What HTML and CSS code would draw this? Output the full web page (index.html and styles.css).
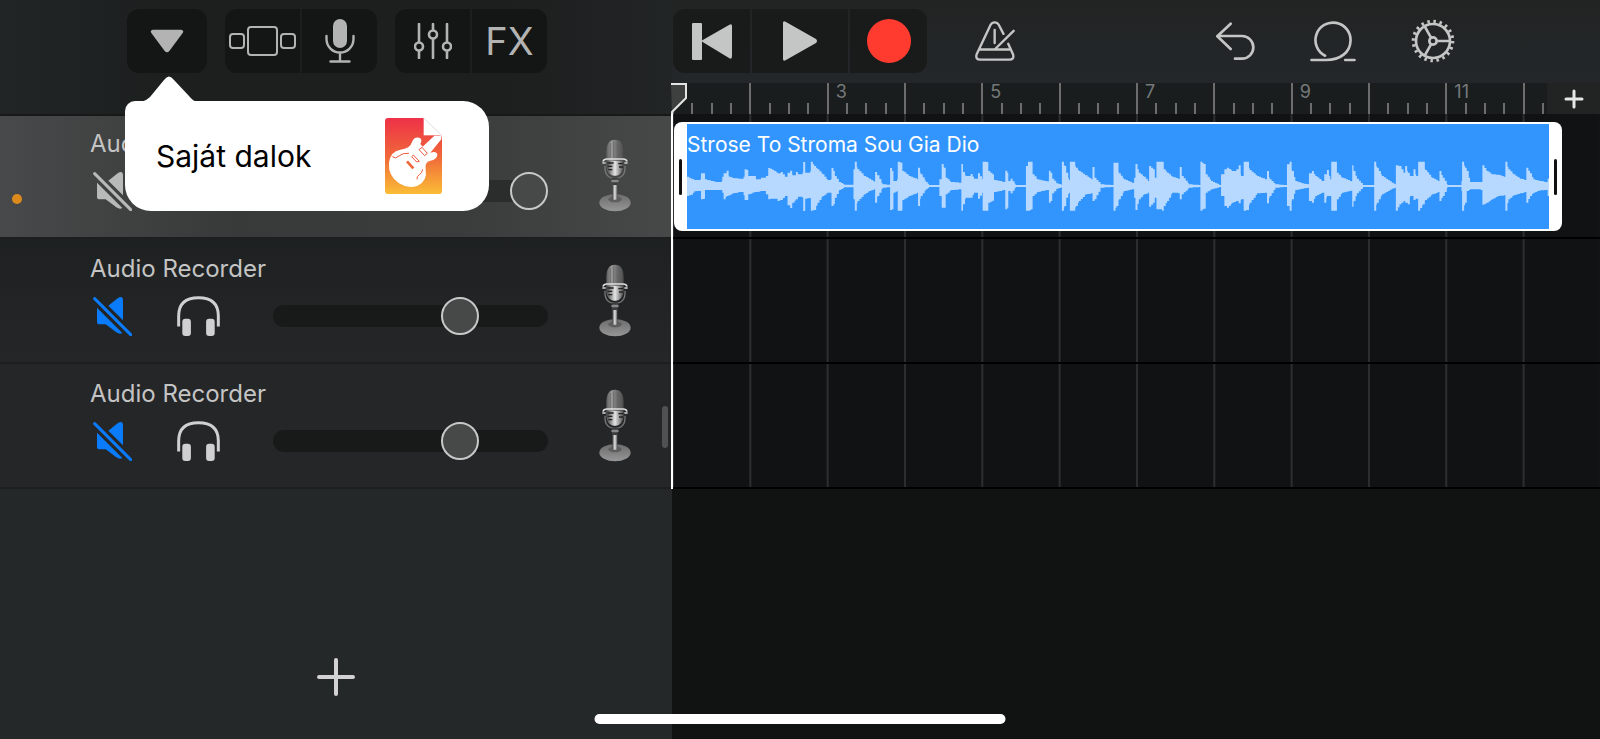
FILE: index.html
```html
<!DOCTYPE html>
<html lang="hu">
<head>
    <meta charset="UTF-8">
    <meta name="viewport" content="width=device-width, initial-scale=1.0">
    <title>GarageBand</title>
    <link rel="stylesheet" href="styles.css">
</head>
<body>
    <!-- shared icons -->
    <svg class="defs" width="0" height="0" aria-hidden="true">
        <defs>
            <linearGradient id="micHead" x1="0" x2="1">
                <stop offset="0" stop-color="#5c5c5c"/>
                <stop offset="0.3" stop-color="#989898"/>
                <stop offset="0.6" stop-color="#6e6e6e"/>
                <stop offset="1" stop-color="#4a4a4a"/>
            </linearGradient>
            <linearGradient id="micBody" x1="0" x2="1">
                <stop offset="0" stop-color="#444"/>
                <stop offset="0.5" stop-color="#e6e6e6"/>
                <stop offset="1" stop-color="#555"/>
            </linearGradient>
            <linearGradient id="micBase" x1="0" x2="0" y1="0" y2="1">
                <stop offset="0" stop-color="#6c6c6c"/>
                <stop offset="1" stop-color="#969696"/>
            </linearGradient>
            <linearGradient id="paper" x1="0" x2="0" y1="0" y2="1">
                <stop offset="0" stop-color="#ee3148"/>
                <stop offset="0.5" stop-color="#f0673a"/>
                <stop offset="1" stop-color="#fabd35"/>
            </linearGradient>
        </defs>
        <symbol id="mute" viewBox="0 0 117 117">
            <path d="M46 26L74 4Q90 -6 90 11V70ZM12 32V74Q12 82 20 82H38L70 106Q80 113 88 108Z" fill="currentColor"/>
            <path d="M5 5L113 113" stroke="currentColor" stroke-width="9" stroke-linecap="round"/>
        </symbol>
        <symbol id="headphones" viewBox="0 0 130 121">
            <path d="M5 92V60Q5 5 65 5Q125 5 125 60V92" fill="none" stroke="currentColor" stroke-width="9"/>
            <rect x="16" y="69" width="26" height="52" rx="9" fill="currentColor"/>
            <rect x="88" y="69" width="26" height="52" rx="9" fill="currentColor"/>
        </symbol>
        <symbol id="studioMic" viewBox="0 0 96 219">
            <ellipse cx="48" cy="191" rx="47" ry="26" fill="url(#micBase)"/>
            <ellipse cx="48" cy="181" rx="20" ry="9" fill="#5e5e5e"/>
            <rect x="40" y="122" width="15" height="60" rx="4" fill="url(#micBody)"/>
            <path d="M18 80Q16 118 48 118Q80 118 78 80" fill="none" stroke="#777" stroke-width="4"/>
            <path d="M22 40Q22 2 48 2Q74 2 74 40V82Q72 110 48 110Q24 110 22 82Z" fill="url(#micHead)"/>
            <path d="M34 12V58M44 8V58M56 8V58M66 14V58" stroke="#606060" stroke-width="2"/>
            <path d="M24 66H72V80Q70 110 48 110Q26 110 24 80Z" fill="url(#micBody)"/>
            <path d="M26 72H44M26 82H40M58 74H72M60 84H72M28 92H40" stroke="#222" stroke-width="4"/>
            <path d="M12 68Q14 60 24 60H72Q82 60 84 68" fill="none" stroke="#ddd" stroke-width="5"/>
            <path d="M10 72H20M76 72H86" stroke="#aaa" stroke-width="6"/>
            <path d="M38 116H58L54 138H42Z" fill="#3c3c3c"/>
            <rect x="37" y="122" width="22" height="8" rx="3" fill="#888"/>
        </symbol>
    </svg>

    <main class="app">
        <section class="tracks">
            <header class="toolbar">
                <div class="menu">
                    <button class="tool single" aria-label="Navigation" aria-expanded="true">
                        <svg width="34" height="24" viewBox="0 0 100 72"><path d="M7 2H93Q102 4 97 12L57 66Q50 74 43 66L3 12Q-2 4 7 2Z" fill="currentColor"/></svg>
                    </button>
                    <div class="popover">
                        <svg class="arrow" width="56" height="26" viewBox="0 0 56 26"><path d="M0 26Q5 25 9 21L23 4Q28 -3 33 4L48 20Q52 25 56 26Z" fill="#fff"/></svg>
                        <button class="popover-item">
                            <span>Saját dalok</span>
                            <svg width="57" height="76" viewBox="0 0 171 228">
                                <path d="M10 0H115L171 57V218Q171 228 161 228H10Q0 228 0 218V10Q0 0 10 0Z" fill="url(#paper)"/>
                                <path d="M116 -2V52H171V-2Z" fill="#fff"/>
                                <path d="M116 0L171 53" fill="none" stroke="#d8cccc" stroke-width="2"/>
                                <path d="M12 134Q16 100 46 95Q76 90 80 74Q86 56 102 59Q114 62 106 78L113 86L148 53H169V64L136 104Q155 98 157 110Q156 124 136 128Q118 132 122 155Q128 188 98 203Q70 214 42 196Q8 172 12 134Z" fill="#fff"/>
                                <path d="M22 116Q32 124 42 114T72 106M96 184Q95 174 103 170T113 154" fill="none" stroke="#ef5b3c" stroke-width="3"/>
                                <path d="M66 130L85 151" stroke="#f0673a" stroke-width="8"/>
                                <path d="M85 111L103 130L95 132L80 116ZM102 95L111 88L127 106L119 113Z" fill="none" stroke="#ef5b3c" stroke-width="3"/>
                            </svg>
                        </button>
                    </div>
                </div>
                <div class="group">
                    <button class="tool" aria-label="Browser">
                        <svg width="67" height="32" viewBox="0 0 67 32" fill="none" stroke="currentColor" stroke-width="2"><rect x="1" y="9" width="14" height="14" rx="3"/><rect x="19" y="2" width="29" height="28" rx="3"/><rect x="52" y="9" width="14" height="14" rx="3"/></svg>
                    </button>
                    <button class="tool" aria-label="Instrument">
                        <svg width="30" height="44" viewBox="0 0 30 44" fill="none" stroke="currentColor" stroke-width="2.4" stroke-linecap="round"><rect x="8" y="0" width="14" height="29" rx="7" fill="currentColor" stroke="none"/><path d="M1.5 17V20A13.5 13.5 0 0 0 28.5 20V17M15 34V42M5.5 42.5H24.5"/></svg>
                    </button>
                </div>
                <div class="group">
                    <button class="tool" aria-label="Track controls">
                        <svg width="38" height="36" viewBox="0 0 38 36" fill="none" stroke="currentColor" stroke-width="2.6" stroke-linecap="round"><path d="M5 1V19M5 28V35M19 1V7M19 16V35M33 1V19M33 28V35"/><circle cx="5" cy="23.5" r="4"/><circle cx="19" cy="11.5" r="4"/><circle cx="33" cy="23.5" r="4"/></svg>
                    </button>
                    <button class="tool fx">FX</button>
                </div>
            </header>

            <article class="track selected">
                <div class="status"><i class="dot"></i></div>
                <div class="info">
                    <h2>Audio Recorder</h2>
                    <div class="controls">
                        <button class="icon" aria-label="Mute"><svg width="39" height="39"><use href="#mute"/></svg></button>
                        <button class="icon" aria-label="Solo"><svg width="43" height="40"><use href="#headphones"/></svg></button>
                        <input type="range" min="0" max="100" value="100" aria-label="Volume">
                    </div>
                </div>
                <svg width="32" height="73"><use href="#studioMic"/></svg>
            </article>
            <article class="track">
                <div class="status"></div>
                <div class="info">
                    <h2>Audio Recorder</h2>
                    <div class="controls">
                        <button class="icon muted" aria-label="Mute"><svg width="39" height="39"><use href="#mute"/></svg></button>
                        <button class="icon" aria-label="Solo"><svg width="43" height="40"><use href="#headphones"/></svg></button>
                        <input type="range" min="0" max="100" value="71" aria-label="Volume">
                    </div>
                </div>
                <svg width="32" height="73"><use href="#studioMic"/></svg>
            </article>
            <article class="track">
                <div class="status"></div>
                <div class="info">
                    <h2>Audio Recorder</h2>
                    <div class="controls">
                        <button class="icon muted" aria-label="Mute"><svg width="39" height="39"><use href="#mute"/></svg></button>
                        <button class="icon" aria-label="Solo"><svg width="43" height="40"><use href="#headphones"/></svg></button>
                        <input type="range" min="0" max="100" value="71" aria-label="Volume">
                    </div>
                </div>
                <svg width="32" height="73"><use href="#studioMic"/></svg>
                <i class="scroll-thumb"></i>
            </article>

            <footer class="add-track">
                <button class="icon" aria-label="Add track">
                    <svg width="38" height="38" viewBox="0 0 38 38"><path d="M19 2V36M2 19H36" stroke="currentColor" stroke-width="4" stroke-linecap="round"/></svg>
                </button>
            </footer>
        </section>

        <section class="arrange">
            <header class="toolbar">
                <div class="group transport">
                    <button class="tool" aria-label="Go to beginning">
                        <svg width="40" height="37" viewBox="0 0 40 37" fill="currentColor"><rect width="10" height="37" rx="1"/><path d="M9 18L37 2Q40 0 40 3V33Q40 37 37 35Z"/></svg>
                    </button>
                    <button class="tool play" aria-label="Play">
                        <svg width="36" height="40" viewBox="0 0 34 40" fill="currentColor"><path d="M0 2Q0 -1 3 1L33 18Q35 20 33 22L3 39Q0 41 0 38Z"/></svg>
                    </button>
                    <button class="tool" aria-label="Record"><i class="record"></i></button>
                </div>
                <button class="icon metronome" aria-label="Metronome">
                    <svg width="40" height="40" viewBox="0 0 118 118" fill="none" stroke="currentColor" stroke-width="7" stroke-linecap="round"><path d="M84 38L70 11Q66 4 58 4Q50 4 46 11L5 98Q0 114 16 114H101Q117 114 112 98L98 67M15 84H102M58 26V65M114 29L58 84"/></svg>
                </button>
                <div class="actions">
                    <button class="icon" aria-label="Undo">
                        <svg width="39" height="39" viewBox="0 0 117 115" fill="none" stroke="currentColor" stroke-width="8" stroke-linecap="round" stroke-linejoin="round"><path d="M44 4L4 42L44 80M4 41H78A34 34 0 0 1 78 109H57"/></svg>
                    </button>
                    <button class="icon" aria-label="Loops">
                        <svg width="46" height="41" viewBox="0 0 138 124" fill="none" stroke="currentColor" stroke-width="8" stroke-linecap="round"><path d="M45 105A53 53 0 1 1 122 60C121 94 92 118 48 118H4M106 118H134"/></svg>
                    </button>
                    <button class="icon" aria-label="Settings">
                        <svg width="44" height="44" viewBox="0 0 132 132" fill="none" stroke="currentColor" stroke-width="8">
                            <circle cx="66" cy="66" r="51"/>
                            <circle cx="66" cy="66" r="59" stroke-width="10" pathLength="100" stroke-dasharray="2 3"/>
                            <circle cx="66" cy="66" r="11"/>
                            <path d="M77 66H117M60 56L41 22M60 76L41 110"/>
                        </svg>
                    </button>
                </div>
            </header>

            <div class="timeline">
                <ol class="ruler" id="ruler"></ol>
                <button class="add-section" aria-label="Add section">
                    <svg width="20" height="20" viewBox="0 0 20 20"><path d="M10 2V18M2 10H18" stroke="currentColor" stroke-width="3" stroke-linecap="round"/></svg>
                </button>
                <div class="lanes">
                    <div class="lane">
                        <div class="clip">
                            <button class="handle" aria-label="Trim start"></button>
                            <div class="region">
                                <span>Strose To Stroma Sou Gia Dio</span>
                                <svg class="wave" viewBox="0 0 2589 150" preserveAspectRatio="none"><path id="wave"/></svg>
                            </div>
                            <button class="handle" aria-label="Trim end"></button>
                        </div>
                    </div>
                    <div class="lane"></div>
                    <div class="lane"></div>
                </div>
                <div class="playhead">
                    <svg width="17" height="31" viewBox="0 0 17 31"><path d="M0 1H15V15L1 29V31" fill="#3e403f" stroke="#e4e4e4" stroke-width="2"/></svg>
                </div>
            </div>
        </section>
    </main>
    <div class="home-bar"></div>

    <script src="timeline.js"></script>
</body>
</html>
```
FILE: styles.css
```css
* {
    box-sizing: border-box;
}
body {
    margin: 0;
    background: #111312;
    color: #c4c4c4;
    font-family: Inter, "Liberation Sans", sans-serif;
}
button {
    margin: 0;
    padding: 0;
    border: none;
    background: none;
    color: inherit;
    font: inherit;
    cursor: pointer;
}
svg {
    display: block;
    flex-shrink: 0;
}
.defs {
    position: absolute;
}
.app {
    display: grid;
    grid-template-columns: 42% 1fr;
    min-height: 100vh;
}

/* toolbars */
.toolbar {
    display: flex;
    align-items: flex-start;
    padding-top: 9px;
}
.tracks .toolbar {
    height: 114px;
    padding-left: 127px;
    gap: 18px;
    background: linear-gradient(90deg, #212526, #1c1f1e 25%, #1c1f1e 75%, #222525);
    color: #b2b3b2;
}
.arrange .toolbar {
    height: 83px;
    padding-left: 1px;
    padding-right: 145px;
    background: linear-gradient(#222423, #23272a);
    color: #c4c5c5;
}
.group {
    display: flex;
    gap: 2px;
    border-radius: 12px;
    overflow: hidden;
}
.tool {
    display: flex;
    align-items: center;
    justify-content: center;
    width: 75px;
    height: 64px;
    background: #131615;
}
.tool.single {
    width: 80px;
    border-radius: 12px;
}
.fx {
    font-size: 38px;
}
.transport .tool {
    width: 77px;
    background: #191b1b;
}
.transport .play {
    width: 96px;
}
.record {
    width: 44px;
    height: 44px;
    border-radius: 50%;
    background: #ff3b30;
}
.icon {
    display: flex;
    align-items: center;
    justify-content: center;
}
.metronome {
    height: 64px;
    margin-left: 48px;
}
.actions {
    display: flex;
    align-items: center;
    gap: 55px;
    height: 64px;
    margin-left: auto;
}

/* popover */
.menu {
    position: relative;
}
.popover {
    position: absolute;
    z-index: 5;
    top: 92px;
    left: -2px;
    width: 364px;
    border-radius: 10px 26px 26px 26px;
    background: #fff;
    color: #000;
}
.arrow {
    position: absolute;
    top: -25px;
    left: 16px;
}
.popover-item {
    display: flex;
    align-items: center;
    justify-content: space-between;
    width: 100%;
    height: 110px;
    padding: 0 47px 0 31px;
    font-size: 30px;
}

/* track headers */
.tracks {
    display: flex;
    flex-direction: column;
    background: #252829;
}
.track {
    position: relative;
    display: grid;
    grid-template-columns: 90px 1fr 32px;
    align-items: center;
    height: 125px;
    padding-right: 41px;
    border-bottom: 2px solid #1c1e1f;
    background: #252628;
}
.track:nth-of-type(2) {
    background: linear-gradient(#1e2121, #252628);
}
.track.selected {
    background: linear-gradient(90deg, #48494a, #383a39 35%, #3b3d3c 70%, #474848);
    box-shadow: inset 0 2px #171919;
}
.dot {
    display: block;
    width: 10px;
    height: 10px;
    margin: 47px 0 0 12px;
    border-radius: 50%;
    background: #dc8a1c;
}
.info {
    align-self: start;
    padding-top: 16px;
}
.info h2 {
    margin: 0 0 13px;
    font-size: 24px;
    font-weight: 400;
    line-height: 28px;
}
.controls {
    display: flex;
    align-items: center;
    gap: 45px;
    height: 40px;
    padding-left: 3px;
    padding-right: 51px;
    color: #d0d0d2;
}
.selected .controls {
    color: #b8b9b9;
}
.controls .muted {
    color: #0a7bfa;
}
input[type="range"] {
    -webkit-appearance: none;
    appearance: none;
    flex: 1;
    min-width: 0;
    height: 38px;
    margin: 0 0 0 8px;
    background: none;
}
input[type="range"]::-webkit-slider-runnable-track {
    height: 22px;
    border-radius: 11px;
    background: #181a1a;
}
.selected input[type="range"]::-webkit-slider-runnable-track {
    background: #2b2d2d;
}
input[type="range"]::-webkit-slider-thumb {
    -webkit-appearance: none;
    width: 38px;
    height: 38px;
    margin-top: -8px;
    border: 2px solid #c8c8c8;
    border-radius: 50%;
    background: #474848;
}
.scroll-thumb {
    position: absolute;
    top: 42px;
    right: 4px;
    width: 6px;
    height: 42px;
    border-radius: 3px;
    background: #505152;
}
.add-track {
    display: flex;
    flex: 1;
    align-items: flex-end;
    justify-content: center;
    padding-bottom: 43px;
    color: #d2d2d4;
}

/* timeline */
.timeline {
    position: relative;
}
.ruler {
    display: grid;
    grid-template-columns: repeat(12, 1fr);
    height: 31px;
    margin: 0;
    padding: 0;
    list-style: none;
    background: #1a1d1e;
}
.bar {
    position: relative;
    display: grid;
    grid-template-columns: repeat(4, 1fr);
    align-items: end;
}
.beat {
    height: 11px;
    border-left: 2px solid #6c6e6e;
}
.beat:first-child {
    height: 31px;
}
.bar span {
    position: absolute;
    top: 0;
    left: 9px;
    color: #76797a;
    font-size: 18px;
    line-height: 18px;
}
.add-section {
    position: absolute;
    top: 0;
    right: 0;
    display: flex;
    align-items: center;
    justify-content: center;
    width: 53px;
    height: 31px;
    background: #222424;
    color: #e6e6e6;
}
.lanes {
    background-color: #111213;
    background-image: linear-gradient(90deg, #2d2e2f 2px, transparent 2px);
    background-size: calc(100% / 12) 100%;
}
.lane {
    height: 125px;
    padding: 8px 38px 0 2px;
    border-bottom: 2px solid #000;
}
.clip {
    display: flex;
    height: 109px;
    border-radius: 8px;
    background: #fff;
}
.region {
    flex: 1;
    display: flex;
    flex-direction: column;
    margin: 2px 0;
    padding-top: 9px;
    background: #3295fe;
    color: #fff;
    font-size: 21px;
    line-height: 24px;
}
.wave {
    width: 100%;
    height: 50px;
    margin-top: 4px;
    fill: #b8d9ff;
}
.handle {
    display: flex;
    align-items: center;
    justify-content: center;
    width: 13px;
}
.handle::before {
    content: "";
    width: 3px;
    height: 36px;
    border-radius: 2px;
    background: #111;
}
.playhead {
    position: absolute;
    top: 0;
    bottom: 0;
    left: -1px;
    display: flex;
    flex-direction: column;
    pointer-events: none;
}
.playhead::after {
    content: "";
    flex: 1;
    border-left: 2px solid #fff;
}
.home-bar {
    position: absolute;
    bottom: 15px;
    left: 50%;
    width: 411px;
    height: 10px;
    border-radius: 5px;
    background: #fff;
    transform: translateX(-50%);
}
```
FILE: timeline.js
```js
const ruler = document.getElementById('ruler');

for (let bar = 1; bar <= 12; bar++) {
    const li = document.createElement('li');
    li.className = 'bar';
    for (let beat = 0; beat < 4; beat++) {
        const tick = document.createElement('i');
        tick.className = 'beat';
        li.appendChild(tick);
    }
    // only odd bars are numbered, bar 1 sits under the playhead
    if (bar % 2 === 1 && bar > 1) {
        const label = document.createElement('span');
        label.textContent = bar;
        li.appendChild(label);
    }
    ruler.appendChild(li);
}

// [position, peak above, peak below]
const peaks = [
    [0, 28, 30], [12, 22, 26], [22, 18, 16], [40, 20, 14], [42, 38, 40], [52, 38, 38], [54, 20, 12], [72, 15, 12], [87, 12, 12], [104, 14, 12],
    [106, 28, 20], [110, 38, 40], [119, 46, 30], [126, 28, 28], [137, 24, 22], [157, 22, 18], [170, 28, 28], [173, 50, 42], [181, 48, 42], [184, 30, 25],
    [202, 30, 18], [207, 20, 18], [222, 25, 15], [237, 30, 25], [244, 54, 40], [250, 52, 38], [262, 45, 38], [272, 38, 45], [282, 42, 42], [294, 28, 30],
    [302, 40, 58], [310, 46, 66], [317, 32, 50], [327, 42, 40], [334, 35, 32], [347, 40, 35], [349, 72, 75], [353, 72, 75], [355, 40, 38], [370, 44, 36],
    [372, 73, 74], [382, 60, 72], [392, 50, 50], [407, 35, 30], [422, 18, 20], [432, 20, 20], [434, 54, 60], [440, 45, 55], [444, 30, 35], [457, 12, 12],
    [472, 4, 4], [497, 4, 4], [500, 50, 40], [504, 73, 74], [512, 50, 45], [532, 30, 25], [547, 22, 15], [563, 12, 10], [565, 42, 50], [572, 32, 30],
    [587, 5, 5], [608, 4, 4], [610, 54, 72], [616, 45, 70], [620, 15, 20], [631, 20, 15], [633, 73, 74], [642, 70, 74], [647, 45, 42], [667, 30, 30],
    [692, 20, 20], [694, 55, 60], [702, 35, 30], [717, 12, 10], [727, 3, 3], [755, 3, 3], [758, 20, 30], [765, 66, 65], [772, 55, 65], [777, 25, 25],
    [792, 12, 12], [822, 10, 10], [824, 66, 74], [829, 42, 55], [837, 30, 35], [852, 36, 35], [862, 22, 20], [874, 38, 38], [886, 20, 20], [888, 73, 74],
    [902, 72, 74], [905, 45, 50], [917, 35, 44], [922, 18, 18], [953, 12, 12], [956, 46, 70], [962, 40, 65], [965, 15, 15], [972, 22, 22], [987, 3, 3],
    [1015, 3, 3], [1018, 60, 74], [1024, 73, 74], [1034, 73, 70], [1038, 35, 30], [1052, 20, 18], [1080, 14, 12], [1087, 46, 50], [1092, 40, 45], [1097, 22, 22],
    [1110, 8, 8], [1124, 4, 4], [1126, 73, 74], [1134, 60, 60], [1139, 40, 35], [1147, 18, 20], [1150, 73, 74], [1160, 73, 74], [1168, 55, 60], [1177, 45, 45],
    [1197, 32, 25], [1214, 20, 22], [1218, 57, 45], [1224, 25, 40], [1242, 5, 5], [1278, 3, 3], [1281, 70, 74], [1290, 70, 60], [1297, 38, 40], [1312, 20, 15],
    [1337, 10, 10], [1343, 25, 35], [1347, 66, 72], [1357, 40, 40], [1372, 28, 25], [1385, 15, 20], [1388, 60, 62], [1400, 50, 50], [1405, 25, 35], [1410, 73, 70],
    [1427, 73, 74], [1432, 50, 60], [1442, 40, 45], [1457, 28, 20], [1476, 22, 22], [1480, 57, 40], [1486, 30, 25], [1507, 5, 5], [1540, 3, 3], [1542, 73, 74],
    [1552, 66, 68], [1558, 35, 20], [1574, 15, 10], [1600, 3, 3], [1604, 35, 30], [1614, 50, 60], [1622, 55, 65], [1637, 45, 50], [1650, 50, 45], [1657, 62, 52],
    [1664, 30, 40], [1670, 30, 40], [1672, 73, 74], [1682, 73, 72], [1690, 48, 50], [1712, 30, 22], [1737, 20, 20], [1742, 45, 52], [1750, 20, 30], [1767, 5, 5],
    [1798, 3, 3], [1802, 65, 60], [1810, 73, 74], [1817, 45, 40], [1827, 15, 12], [1847, 8, 8], [1866, 5, 5], [1868, 38, 45], [1877, 45, 50], [1887, 30, 30],
    [1907, 15, 20], [1914, 35, 50], [1922, 48, 30], [1932, 20, 30], [1935, 73, 74], [1947, 73, 74], [1952, 40, 40], [1967, 25, 20], [1994, 14, 14], [1998, 62, 62],
    [2002, 45, 45], [2012, 22, 22], [2030, 3, 3], [2058, 3, 3], [2064, 73, 74], [2072, 55, 50], [2087, 30, 25], [2117, 10, 8], [2127, 5, 5], [2129, 62, 74],
    [2140, 60, 55], [2152, 40, 45], [2157, 60, 50], [2165, 40, 55], [2172, 30, 30], [2182, 50, 42], [2190, 30, 38], [2196, 73, 74], [2210, 73, 55], [2217, 48, 42],
    [2237, 25, 25], [2256, 15, 18], [2260, 45, 45], [2270, 25, 30], [2284, 3, 3], [2320, 3, 3], [2326, 15, 15], [2328, 73, 74], [2337, 55, 50], [2342, 45, 15],
    [2352, 12, 10], [2384, 12, 12], [2389, 62, 56], [2402, 45, 50], [2417, 35, 40], [2435, 34, 30], [2454, 28, 28], [2458, 73, 74], [2467, 50, 40], [2482, 35, 28],
    [2502, 22, 22], [2518, 18, 18], [2521, 55, 50], [2532, 38, 30], [2542, 20, 20], [2557, 16, 14], [2577, 12, 12], [2585, 22, 30], [2589, 22, 30]
];

// attacks jump straight up, decays fall off in small steps
const level = (from, to, t) => Math.round(to > from ? from : from + (to - from) * t);

let upper = '';
let lower = '';
for (let i = 0; i < peaks.length - 1; i++) {
    const [x, up, down] = peaks[i];
    const [nextX, nextUp, nextDown] = peaks[i + 1];
    for (let px = x; px < nextX; px += 6) {
        const t = (px - x) / (nextX - x);
        const end = Math.min(px + 6, nextX);
        const y1 = 75 - level(up, nextUp, t);
        const y2 = 75 + level(down, nextDown, t);
        upper += `L${px} ${y1}L${end} ${y1}`;
        lower = `L${end} ${y2}L${px} ${y2}` + lower;
    }
}
document.getElementById('wave').setAttribute('d', `M0 75${upper}${lower}Z`);
```
